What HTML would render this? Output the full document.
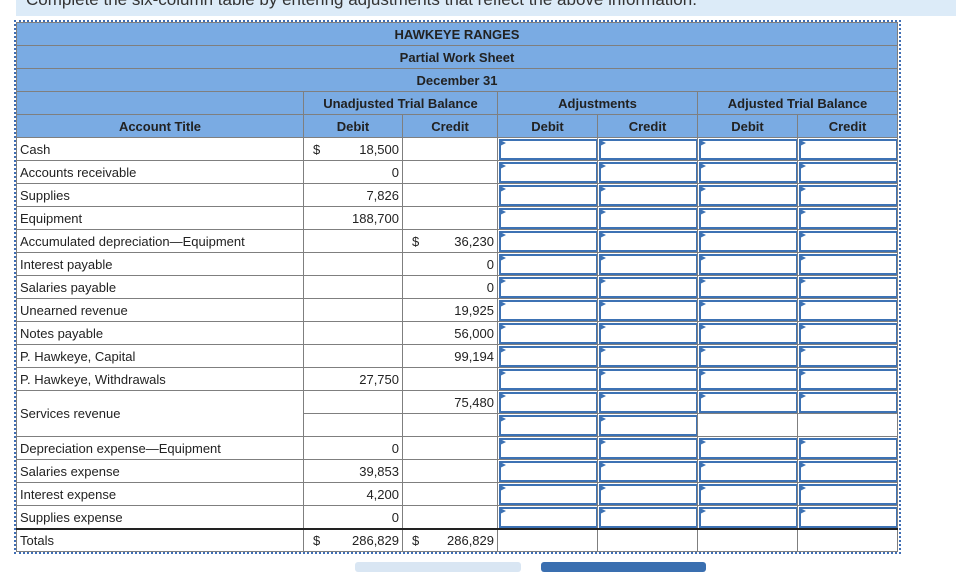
<!DOCTYPE html>
<html><head><meta charset="utf-8"><style>
body{margin:0;width:956px;height:566px;overflow:hidden;background:#fff;font-family:"Liberation Sans",Arial,sans-serif;font-size:13px;color:#222;position:relative}
.banner{position:absolute;left:16px;top:0;width:940px;height:16px;background:#dcebf8;overflow:hidden}
.banner span{position:absolute;left:10px;top:-10px;font-size:17px;color:#333;white-space:nowrap}
.wrap{position:absolute;left:14px;top:20px;width:883px;height:530px;border:2px dotted #3f6eb5}
table{position:absolute;left:16px;top:22px;border-collapse:collapse;table-layout:fixed}
td{border:1px solid #7f7f7f;height:22px;padding:0 3px;white-space:nowrap;overflow:hidden;position:relative}
tr.h td{background:#7aabe3;font-weight:bold;text-align:center;color:#222}
td.n{text-align:right}
td.i{padding:0}
.in{position:absolute;left:1px;top:1px;right:0;bottom:0;border:2px solid #3d72b4;border-right-width:1px;background:#fff}
.in:before{content:"";position:absolute;left:-1px;top:-1px;border-left:6px solid #3d72b4;border-top:3px solid transparent;border-bottom:3px solid transparent}
.d{float:left;padding-left:6px}
tr.t td{border-top:2px solid #222;height:21px}
.btn1{position:absolute;left:355px;top:562px;width:166px;height:10px;background:#d9e6f3;border-radius:3px}
.btn2{position:absolute;left:541px;top:562px;width:165px;height:10px;background:#3a6fb0;border-radius:3px}
</style></head><body>
<div class="banner"><span>Complete the six-column table by entering adjustments that reflect the above information.</span></div>
<div class="wrap"></div>
<table>
<colgroup><col style="width:287px"><col style="width:99px"><col style="width:95px"><col style="width:100px"><col style="width:100px"><col style="width:100px"><col style="width:100px"></colgroup>
<tr class="h"><td colspan="7">HAWKEYE RANGES</td></tr>
<tr class="h"><td colspan="7">Partial Work Sheet</td></tr>
<tr class="h"><td colspan="7">December 31</td></tr>
<tr class="h"><td></td><td colspan="2">Unadjusted Trial Balance</td><td colspan="2">Adjustments</td><td colspan="2">Adjusted Trial Balance</td></tr>
<tr class="h"><td>Account Title</td><td>Debit</td><td>Credit</td><td>Debit</td><td>Credit</td><td>Debit</td><td>Credit</td></tr>
<tr><td>Cash</td><td class="n"><span class="d">$</span>18,500</td><td></td><td class="i"><div class="in"></div></td><td class="i"><div class="in"></div></td><td class="i"><div class="in"></div></td><td class="i"><div class="in"></div></td></tr>
<tr><td>Accounts receivable</td><td class="n">0</td><td></td><td class="i"><div class="in"></div></td><td class="i"><div class="in"></div></td><td class="i"><div class="in"></div></td><td class="i"><div class="in"></div></td></tr>
<tr><td>Supplies</td><td class="n">7,826</td><td></td><td class="i"><div class="in"></div></td><td class="i"><div class="in"></div></td><td class="i"><div class="in"></div></td><td class="i"><div class="in"></div></td></tr>
<tr><td>Equipment</td><td class="n">188,700</td><td></td><td class="i"><div class="in"></div></td><td class="i"><div class="in"></div></td><td class="i"><div class="in"></div></td><td class="i"><div class="in"></div></td></tr>
<tr><td>Accumulated depreciation—Equipment</td><td></td><td class="n"><span class="d">$</span>36,230</td><td class="i"><div class="in"></div></td><td class="i"><div class="in"></div></td><td class="i"><div class="in"></div></td><td class="i"><div class="in"></div></td></tr>
<tr><td>Interest payable</td><td></td><td class="n">0</td><td class="i"><div class="in"></div></td><td class="i"><div class="in"></div></td><td class="i"><div class="in"></div></td><td class="i"><div class="in"></div></td></tr>
<tr><td>Salaries payable</td><td></td><td class="n">0</td><td class="i"><div class="in"></div></td><td class="i"><div class="in"></div></td><td class="i"><div class="in"></div></td><td class="i"><div class="in"></div></td></tr>
<tr><td>Unearned revenue</td><td></td><td class="n">19,925</td><td class="i"><div class="in"></div></td><td class="i"><div class="in"></div></td><td class="i"><div class="in"></div></td><td class="i"><div class="in"></div></td></tr>
<tr><td>Notes payable</td><td></td><td class="n">56,000</td><td class="i"><div class="in"></div></td><td class="i"><div class="in"></div></td><td class="i"><div class="in"></div></td><td class="i"><div class="in"></div></td></tr>
<tr><td>P. Hawkeye, Capital</td><td></td><td class="n">99,194</td><td class="i"><div class="in"></div></td><td class="i"><div class="in"></div></td><td class="i"><div class="in"></div></td><td class="i"><div class="in"></div></td></tr>
<tr><td>P. Hawkeye, Withdrawals</td><td class="n">27,750</td><td></td><td class="i"><div class="in"></div></td><td class="i"><div class="in"></div></td><td class="i"><div class="in"></div></td><td class="i"><div class="in"></div></td></tr>
<tr><td rowspan="2">Services revenue</td><td></td><td class="n">75,480</td><td class="i"><div class="in"></div></td><td class="i"><div class="in"></div></td><td class="i"><div class="in"></div></td><td class="i"><div class="in"></div></td></tr>
<tr><td></td><td></td><td class="i"><div class="in"></div></td><td class="i"><div class="in"></div></td><td></td><td></td></tr>
<tr><td>Depreciation expense—Equipment</td><td class="n">0</td><td></td><td class="i"><div class="in"></div></td><td class="i"><div class="in"></div></td><td class="i"><div class="in"></div></td><td class="i"><div class="in"></div></td></tr>
<tr><td>Salaries expense</td><td class="n">39,853</td><td></td><td class="i"><div class="in"></div></td><td class="i"><div class="in"></div></td><td class="i"><div class="in"></div></td><td class="i"><div class="in"></div></td></tr>
<tr><td>Interest expense</td><td class="n">4,200</td><td></td><td class="i"><div class="in"></div></td><td class="i"><div class="in"></div></td><td class="i"><div class="in"></div></td><td class="i"><div class="in"></div></td></tr>
<tr><td>Supplies expense</td><td class="n">0</td><td></td><td class="i"><div class="in"></div></td><td class="i"><div class="in"></div></td><td class="i"><div class="in"></div></td><td class="i"><div class="in"></div></td></tr>
<tr class="t"><td>Totals</td><td class="n"><span class="d">$</span>286,829</td><td class="n"><span class="d">$</span>286,829</td><td></td><td></td><td></td><td></td></tr>
</table>
<div class="btn1"></div><div class="btn2"></div>
</body></html>
